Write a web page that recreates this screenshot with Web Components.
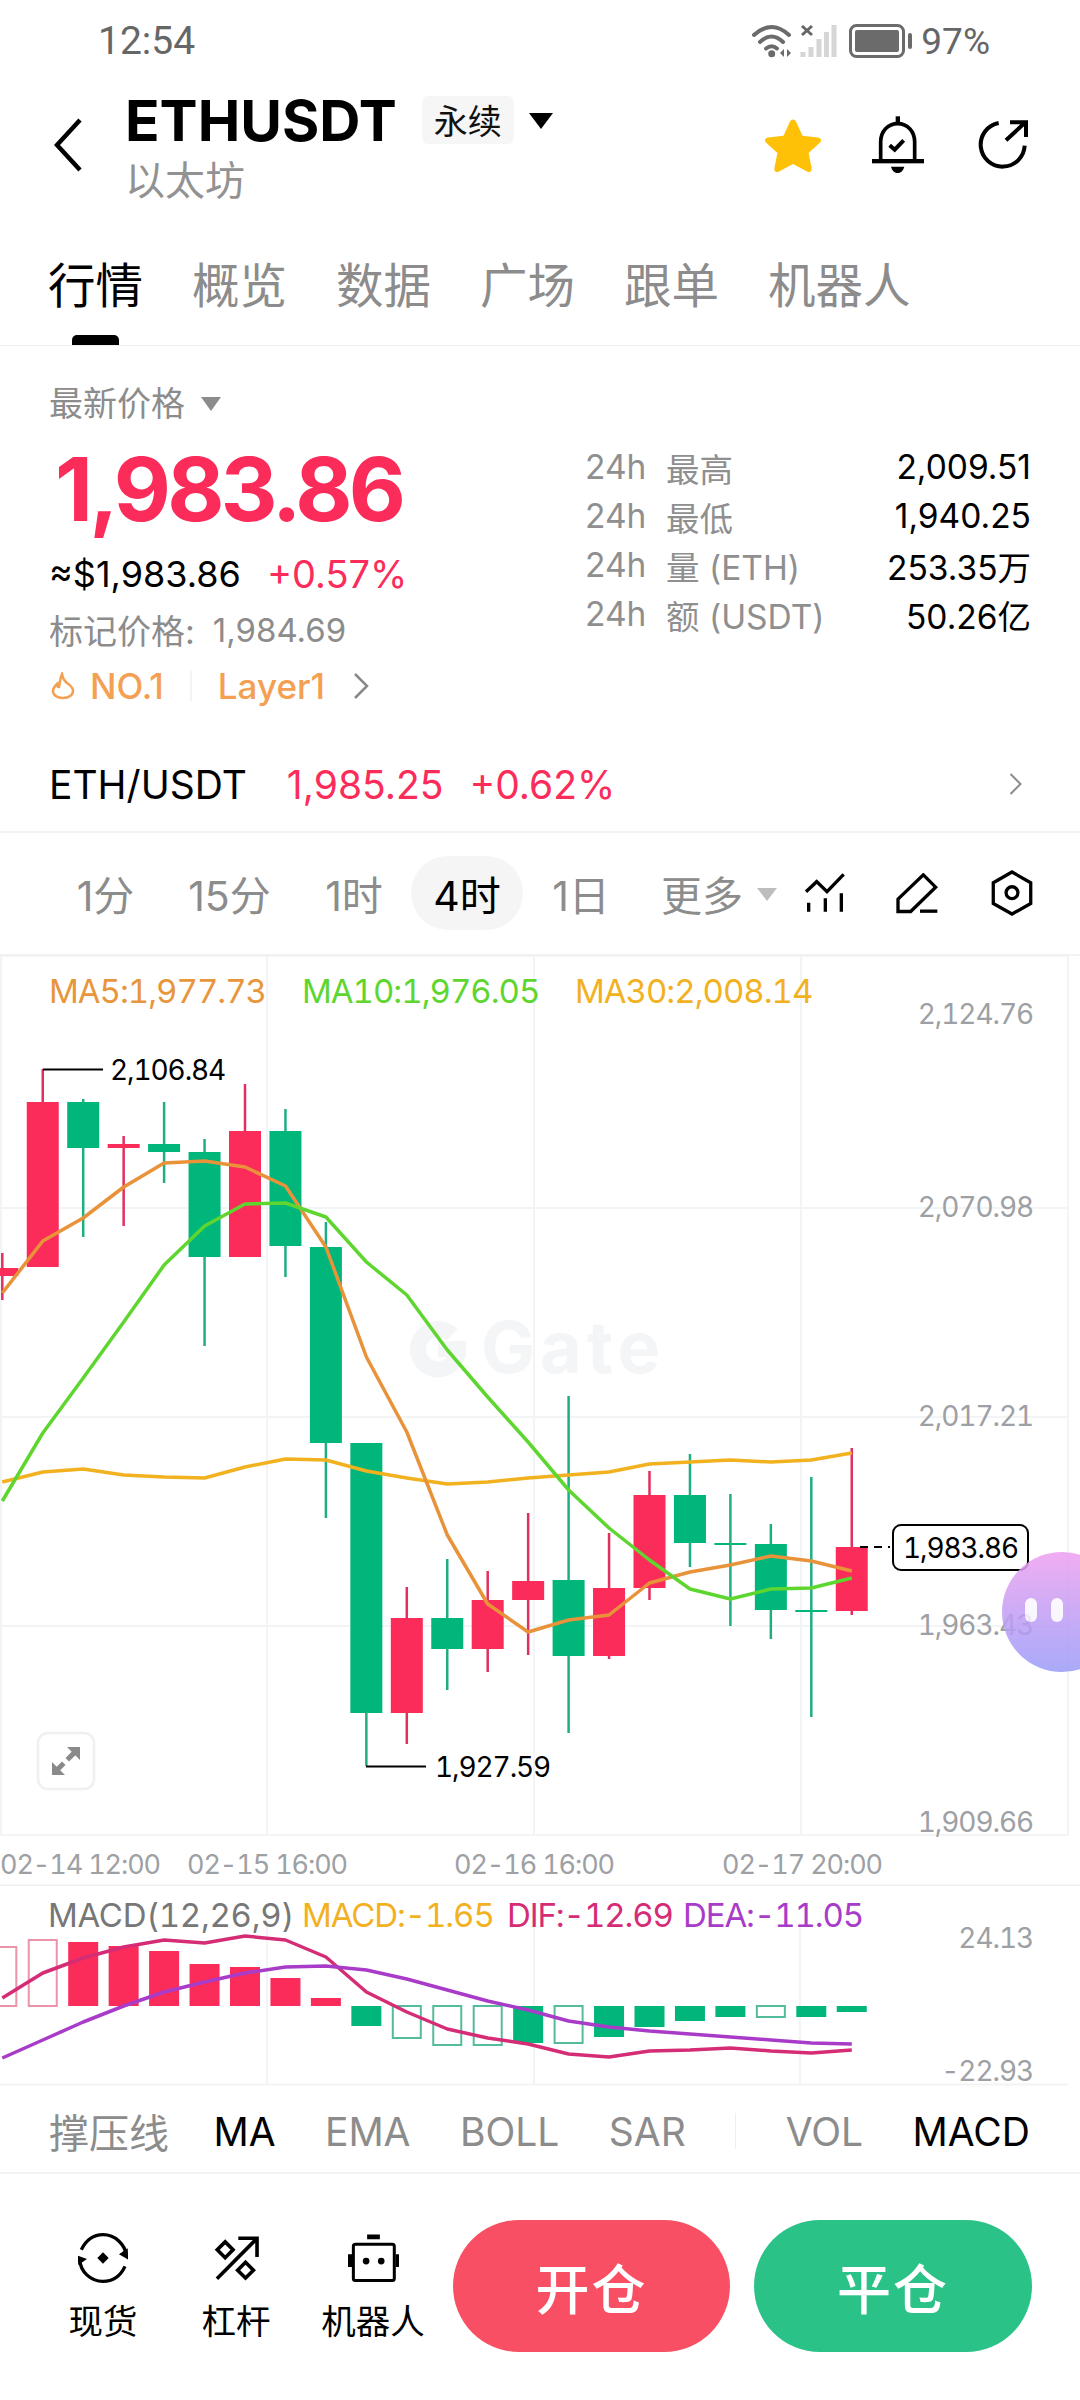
<!DOCTYPE html>
<html lang="zh">
<head>
<meta charset="utf-8">
<title>ETHUSDT</title>
<style>
html, body { margin: 0; padding: 0; background: #fff; }
body { font-family: Inter, "Noto Sans CJK SC", sans-serif; }
</style>
</head>
<body>
<market-app>
    <status-bar></status-bar>
    <market-header></market-header>
    <market-tabs>
        <market-tab active>行情</market-tab>
        <market-tab>概览</market-tab>
        <market-tab>数据</market-tab>
        <market-tab>广场</market-tab>
        <market-tab>跟单</market-tab>
        <market-tab>机器人</market-tab>
    </market-tabs>
    <price-panel>
        <stat-row label="最高" value="2,009.51"></stat-row>
        <stat-row label="最低" value="1,940.25"></stat-row>
        <stat-row label="量 (ETH)" value="253.35万"></stat-row>
        <stat-row label="额 (USDT)" value="50.26亿"></stat-row>
    </price-panel>
    <spot-row></spot-row>
    <interval-bar></interval-bar>
    <kline-chart></kline-chart>
    <macd-panel></macd-panel>
    <indicator-bar></indicator-bar>
    <trade-bar></trade-bar>
    <float-ball></float-ball>
</market-app>

<script>
const RED = '#fb2c5a';
const GREEN = '#00b67a';
const GRID = '#f3f4f5';
const candleX = (i) => 2.3 + 40.45 * i;

// [up, bodyTop, bodyBottom, wickTop, wickBottom]
const CANDLES = [
    [1, 1268, 1276, 1253, 1300], [1, 1102, 1267, 1069, 1267], [0, 1102, 1148, 1099, 1237],
    [1, 1144, 1148, 1136, 1226], [0, 1144, 1152, 1102, 1183], [0, 1152, 1257, 1139, 1346],
    [1, 1131, 1257, 1084, 1257], [0, 1131, 1246, 1109, 1277], [0, 1247, 1443, 1222, 1518],
    [0, 1443, 1713, 1443, 1766], [1, 1618, 1713, 1587, 1744], [0, 1618, 1649, 1559, 1690],
    [1, 1600, 1649, 1571, 1672], [1, 1581, 1600, 1513, 1655], [0, 1580, 1656, 1396, 1733],
    [1, 1588, 1656, 1533, 1659], [1, 1495, 1588, 1471, 1600], [0, 1495, 1543, 1454, 1567],
    [0, 1543, 1545, 1494, 1626], [0, 1544, 1610, 1524, 1639], [0, 1610, 1612, 1477, 1717],
    [1, 1547, 1611, 1448, 1615]
];
const MA5 = [1293, 1241, 1218, 1187, 1163, 1161, 1167, 1186, 1247, 1357, 1432, 1535, 1604, 1632, 1620, 1615, 1583, 1572, 1565, 1556, 1561, 1571];
const MA10 = [1501, 1433, 1378, 1322, 1265, 1226, 1204, 1203, 1217, 1262, 1295, 1350, 1397, 1442, 1490, 1528, 1560, 1589, 1599, 1589, 1588, 1578];
const MA30 = [1482, 1472, 1469, 1475, 1477, 1478, 1467, 1459, 1460, 1471, 1478, 1484, 1482, 1478, 1475, 1472, 1464, 1462, 1460, 1462, 1460, 1453];
const DIF = [1998, 1973, 1958, 1947, 1940, 1943, 1936, 1940, 1957, 1992, 2012, 2029, 2038, 2044, 2054, 2057, 2051, 2050, 2048, 2051, 2053, 2050];
const DEA = [2058, 2040, 2022, 2006, 1992, 1982, 1973, 1967, 1966, 1970, 1979, 1990, 2001, 2010, 2021, 2027, 2031, 2034, 2037, 2040, 2043, 2044];
// [solid, barEnd] drawn from the zero line at y=2006
const MACD_BARS = [
    [0, 1947], [0, 1940], [1, 1942], [1, 1946], [1, 1951], [1, 1964], [1, 1967], [1, 1978], [1, 1998],
    [1, 2026], [0, 2038], [0, 2045], [0, 2045], [1, 2043], [0, 2043], [1, 2037], [1, 2027], [1, 2021],
    [1, 2017], [0, 2017], [1, 2017], [1, 2012]
];

const linePoints = (ys) => ys.map((y, i) => `${candleX(i).toFixed(1)},${y}`).join(' ');

class MarketApp extends HTMLElement {
    constructor() {
        super();
        this.attachShadow({ mode: 'open' });
    }

    connectedCallback() {
        this.shadowRoot.innerHTML = `
        <style>
            :host {
                display: flex;
                flex-direction: column;
                position: relative;
                width: 1080px;
                height: 2400px;
                overflow: hidden;
                background: #fff;
                color: #000;
                font-family: Inter, "Noto Sans CJK SC", sans-serif;
            }
        </style>
        <slot></slot>`;
    }
}

class StatusBar extends HTMLElement {
    constructor() {
        super();
        this.attachShadow({ mode: 'open' });
    }

    connectedCallback() {
        this.shadowRoot.innerHTML = `
        <style>
            :host {
                display: flex;
                align-items: center;
                height: 73px;
                padding: 5px 90px 0 98px;
                color: #666;
                font-family: Roboto, sans-serif;
            }
            .time { font-size: 39px; }
            .right { margin-left: auto; display: flex; align-items: center; gap: 8px; }
            .pct { font-size: 37px; }
            svg { display: block; }
        </style>
        <span class="time">12:54</span>
        <div class="right">
            <svg width="162" height="34" viewBox="0 0 162 34">
                <g fill="none" stroke="#6b6b6b" stroke-width="4" stroke-linecap="round">
                    <path d="M3 11Q20.7-5 38 11"/>
                    <path d="M9 18Q20.7 7 32 18"/>
                    <path d="M15 24.500Q20.700 20 26 24.500"/>
                </g>
                <circle cx="20.700" cy="29.700" r="3.500" fill="#6b6b6b"/>
                <path d="M33 25v8l-4-4zM36 25v8l4-4z" fill="#6b6b6b"/>
                <path d="M51 2l10 9M61 2l-10 9" stroke="#666" stroke-width="3"/>
                <g stroke="#d6d6d6" stroke-width="5">
                    <path d="M52 28v5M60 23v10M68 15v18M75.500 8v25M83 1v32"/>
                </g>
                <rect x="99.500" y="1.500" width="53" height="31" rx="6" fill="none" stroke="#6b6b6b" stroke-width="3"/>
                <rect x="104" y="6" width="44" height="22" rx="2" fill="#6b6b6b"/>
                <rect x="157" y="9" width="4" height="16" rx="2" fill="#6b6b6b"/>
            </svg>
            <span class="pct">97%</span>
        </div>`;
    }
}

class MarketHeader extends HTMLElement {
    constructor() {
        super();
        this.attachShadow({ mode: 'open' });
    }

    connectedCallback() {
        this.shadowRoot.innerHTML = `
        <style>
            :host {
                display: flex;
                align-items: center;
                height: 134px;
                padding: 0 51px 0 54px;
            }
            svg { display: block; flex: none; }
            .title { margin-left: 43px; margin-top: 1px; }
            .top { display: flex; align-items: center; height: 60px; }
            .sym { font-size: 57px; font-weight: 700; line-height: 60px; position: relative; top: 1px; }
            .badge {
                margin-left: 25px;
                width: 92px;
                height: 48px;
                border-radius: 6px;
                background: #f6f6f6;
                display: flex;
                align-items: center;
                justify-content: center;
                font-size: 34px;
                color: #111;
            }
            .caret { margin-left: 15px; margin-top: 2px; }
            .sub { margin-top: 11px; font-size: 40px; line-height: 40px; color: #929292; }
            .icons { margin-left: auto; display: flex; align-items: center; }
            .bell { margin-left: 49px; }
            .share { margin-left: 53px; }
        </style>
        <svg width="28" height="54" viewBox="0 0 28 54"><path d="M26 2L3 27l23 25" fill="none" stroke="#000" stroke-width="4.500"/></svg>
        <div class="title">
            <div class="top">
                <span class="sym">ETHUSDT</span>
                <span class="badge">永续</span>
                <svg class="caret" width="24" height="16" viewBox="0 0 24 16"><path d="M0 0h24L12 16z" fill="#000"/></svg>
            </div>
            <div class="sub">以太坊</div>
        </div>
        <div class="icons">
            <svg width="60" height="56" viewBox="0 0 60 56"><path d="M30 2.500c1.500 0 2.500 1 3.200 2.600l6.300 13.600 15.300 1.800c3.500.5 4.200 3.400 2 5.300L45.600 36l3 15c.6 3.300-1.800 4.900-4.600 3.400L30 47l-14 7.400c-2.800 1.500-5.200-.1-4.600-3.400l3-15L3.200 25.800c-2.200-1.900-1.500-4.800 2-5.300l15.300-1.800 6.300-13.600c.7-1.600 1.700-2.600 3.200-2.600z" fill="#ffc107"/></svg>
            <svg class="bell" width="52" height="58" viewBox="398 318 156 172">
                <g fill="none" stroke="#000" stroke-width="11">
                    <path d="M424 452V395c0-32 22-55 51-55s51 23 51 55v57"/>
                    <path d="M451 405l15 13 27-28" stroke-width="12"/>
                </g>
                <rect x="398" y="446" width="156" height="13" fill="#000"/>
                <rect x="469" y="318" width="13" height="20" fill="#000"/>
                <path d="M455 469h40c-4 14-12 19-20 19s-16-5-20-19z" fill="#000"/>
            </svg>
            <svg class="share" width="52" height="52" viewBox="713 332 156 156">
                <g fill="none" stroke="#000" stroke-width="12">
                    <path d="M778 344A66 66 0 1 0 856 412"/>
                    <path d="M800 396l58-54M812 342h48v44"/>
                </g>
            </svg>
        </div>`;
    }
}

class MarketTabs extends HTMLElement {
    constructor() {
        super();
        this.attachShadow({ mode: 'open' });
    }

    connectedCallback() {
        this.shadowRoot.innerHTML = `
        <style>
            :host {
                display: flex;
                gap: 49px;
                height: 133px;
                padding-left: 48px;
                border-bottom: 1px solid #f0f0f0;
            }
        </style>
        <slot></slot>`;
    }
}

class MarketTab extends HTMLElement {
    constructor() {
        super();
        this.attachShadow({ mode: 'open' });
    }

    connectedCallback() {
        this.shadowRoot.innerHTML = `
        <style>
            :host {
                display: block;
                position: relative;
                font-size: 47.500px;
                line-height: 148px;
                height: 133px;
                color: #8c8c8c;
            }
            :host([active]) { color: #000; }
            :host([active])::after {
                content: "";
                position: absolute;
                left: 24px;
                bottom: 0;
                width: 47px;
                height: 10px;
                border-radius: 5px 5px 0 0;
                background: #000;
            }
        </style>
        <slot></slot>`;
    }
}

class StatRow extends HTMLElement {
    constructor() {
        super();
        this.attachShadow({ mode: 'open' });
    }

    connectedCallback() {
        this.shadowRoot.innerHTML = `
        <style>
            :host {
                display: flex;
                align-items: center;
                height: 49px;
                font-size: 33.500px;
            }
            .period { width: 81px; color: #8f8f8f; }
            .label { color: #8f8f8f; }
            .value { margin-left: auto; color: #000; }
        </style>
        <span class="period">24h</span>
        <span class="label">${this.getAttribute('label')}</span>
        <span class="value">${this.getAttribute('value')}</span>`;
    }
}

class PricePanel extends HTMLElement {
    constructor() {
        super();
        this.attachShadow({ mode: 'open' });
    }

    connectedCallback() {
        this.shadowRoot.innerHTML = `
        <style>
            :host {
                display: grid;
                grid-template-columns: 536px 446px;
                height: 386px;
                padding: 0 49px;
            }
            .left { padding-top: 36px; }
            .head { display: flex; align-items: center; height: 40px; font-size: 34px; color: #8c8c8c; }
            .head svg { margin-left: 16px; margin-top: 4px; }
            .price {
                margin-top: 14px;
                margin-left: 6px;
                font-size: 88px;
                font-weight: 700;
                line-height: 106px;
                letter-spacing: -3.700px;
                color: ${RED};
            }
            .line { display: flex; align-items: center; height: 50px; font-size: 36px; }
            .usd { margin-top: 7px; }
            .up { margin-left: 26px; font-size: 38px; color: ${RED}; }
            .mark { margin-top: 6px; font-size: 34px; color: #8c8c8c; }
            .mark span { margin-left: 18px; font-size: 33px; }
            .tags { margin-top: 6px; font-size: 35px; color: #f4a052; font-weight: 500; }
            .tags .no { margin-left: 15px; }
            .tags i { width: 2px; height: 30px; background: #f4f4f4; margin: 0 26px 0 26px; }
            .tags .chev { margin-left: 28px; }
            .right { padding-top: 97px; }
            svg { display: block; flex: none; }
        </style>
        <div class="left">
            <div class="head">最新价格
                <svg width="20" height="14" viewBox="0 0 20 14"><path d="M0 0h20L10 14z" fill="#8c8c8c"/></svg>
            </div>
            <div class="price">1,983.86</div>
            <div class="line usd"><span>≈$1,983.86</span><span class="up">+0.57%</span></div>
            <div class="line mark">标记价格:<span>1,984.69</span></div>
            <div class="line tags">
                <svg width="24" height="28" viewBox="0 0 24 28" style="margin-left:2px"><path d="M11 2c1 5 2 6 5 9 3 2 6 5 6 8 0 4-4 7-10 7S2 23 2 19c0-3 2-5 4-7 0 2 1 3 2 3 1-4 1-9 3-13z" fill="none" stroke="#f4a052" stroke-width="2.500"/></svg>
                <span class="no">NO.1</span><i></i><span>Layer1</span>
                <svg class="chev" width="16" height="26" viewBox="0 0 16 26"><path d="M2 1l12 12L2 25" fill="none" stroke="#888" stroke-width="2.500"/></svg>
            </div>
        </div>
        <div class="right"><slot></slot></div>`;
    }
}

class SpotRow extends HTMLElement {
    constructor() {
        super();
        this.attachShadow({ mode: 'open' });
    }

    connectedCallback() {
        this.shadowRoot.innerHTML = `
        <style>
            :host {
                display: flex;
                align-items: center;
                height: 93px;
                padding: 7px 57px 0 49px;
                border-bottom: 2px solid #f2f2f2;
                font-size: 39px;
            }
            .last { margin-left: 40px; color: ${RED}; }
            .chg { margin-left: 26px; color: ${RED}; }
            svg { margin-left: auto; display: block; }
        </style>
        <span>ETH/USDT</span>
        <span class="last">1,985.25</span>
        <span class="chg">+0.62%</span>
        <svg width="14" height="22" viewBox="0 0 14 22"><path d="M1.500 1l10 10-10 10" fill="none" stroke="#8c8c8c" stroke-width="2"/></svg>`;
    }
}

class IntervalBar extends HTMLElement {
    constructor() {
        super();
        this.attachShadow({ mode: 'open' });
    }

    connectedCallback() {
        const items = [['1分', 113], ['15分', 135], ['1时', 114], ['4时', 112], ['1日', 116], ['更多', 126]];
        this.shadowRoot.innerHTML = `
        <style>
            :host {
                display: flex;
                align-items: center;
                height: 121px;
                padding-left: 49px;
                border-bottom: 2px solid #f2f2f2;
                font-size: 41px;
                color: #8c8c8c;
            }
            .item {
                display: flex;
                align-items: center;
                justify-content: center;
                height: 74px;
                border-radius: 37px;
            }
            .item.on { background: #f5f5f5; color: #000; }
            svg { display: block; flex: none; }
            .tri { margin-left: -8px; margin-top: 2px; }
            .i1 { margin-left: 26px; }
            .i2 { margin-left: 49px; }
            .i3 { margin-left: 53px; }
        </style>
        ${items.map(([t, w]) => `<div class="item${t === '4时' ? ' on' : ''}" style="width:${w}px">${t}</div>`).join('')}
        <svg class="tri" width="20" height="13" viewBox="0 0 20 13"><path d="M0 0h20L10 13z" fill="#bdbdbd"/></svg>
        <svg class="i1" width="44" height="40" viewBox="66 44 122 120">
            <path d="M70 100l32-30 31 30 50-52" fill="none" stroke="#000" stroke-width="10"/>
            <path d="M78 133v27M128 120v40M176 105v55" fill="none" stroke="#000" stroke-width="10"/>
        </svg>
        <svg class="i2" width="42" height="41" viewBox="346 40 126 122">
            <path d="M428 45l37 37-75 73h-38v-37z" fill="none" stroke="#000" stroke-width="10"/>
            <path d="M418 154h52" fill="none" stroke="#000" stroke-width="10"/>
        </svg>
        <svg class="i3" width="42" height="46" viewBox="627 36 126 140">
            <path d="M690 42l57 33v63l-57 32-57-32V75z" fill="none" stroke="#000" stroke-width="10"/>
            <circle cx="690" cy="105" r="18" fill="none" stroke="#000" stroke-width="10"/>
        </svg>`;
    }
}

class KlineChart extends HTMLElement {
    constructor() {
        super();
        this.attachShadow({ mode: 'open' });
    }

    connectedCallback() {
        const grid = [1, 267, 534, 801, 1068].map((x) => `<path d="M${x} 956V1835"/>`).join('')
            + [956, 1208, 1417, 1626, 1835].map((y) => `<path d="M0 ${y}H1068"/>`).join('');
        const candles = CANDLES.map(([up, top, bottom, wickTop, wickBottom], i) => {
            const x = candleX(i);
            const color = up ? RED : GREEN;
            return `<path d="M${x} ${wickTop}V${wickBottom}" stroke="${up ? '#e0305f' : '#1fae84'}" stroke-width="2.500"/>`
                + `<rect x="${x - 16}" y="${top}" width="32" height="${bottom - top}" fill="${color}"/>`;
        }).join('');
        const axis = [['2,124.76', 1014], ['2,070.98', 1207], ['2,017.21', 1416], ['1,963.43', 1625], ['1,909.66', 1822]];
        const dates = [['02-14 12:00', 0], ['02-15 16:00', 187], ['02-16 16:00', 454], ['02-17 20:00', 722]];
        this.shadowRoot.innerHTML = `
        <style>
            :host { display: block; height: 930px; }
            svg { display: block; }
            text {
                font-family: Inter, sans-serif;
                font-size: 28px;
                letter-spacing: -1.100px;
                font-variant-numeric: tabular-nums;
                dominant-baseline: central;
            }
            .axis { fill: #9da0a4; }
            .date { fill: #9da0a4; font-size: 27px; }
            .ma { font-size: 33px; letter-spacing: -1px; }
            .mark { fill: #000; }
            .wm { font-size: 72px; font-weight: 700; fill: #f3f5f6; letter-spacing: 5px; dominant-baseline: auto; }
        </style>
        <svg width="1080" height="930" viewBox="0 956 1080 930">
            <g stroke="${GRID}" stroke-width="2" fill="none">${grid}</g>
            <path d="M458 1349A20 20 0 1 1 452 1335" fill="none" stroke="#f3f5f6" stroke-width="16"/>
            <rect x="438" y="1341" width="28" height="16" fill="#f3f5f6"/>
            <text class="wm" x="481" y="1373">Gate</text>
            ${candles}
            <g fill="none" stroke-width="3.500" stroke-linejoin="round">
                <polyline points="${linePoints(MA30)}" stroke="#f2b11f"/>
                <polyline points="${linePoints(MA5)}" stroke="#e8923a"/>
                <polyline points="${linePoints(MA10)}" stroke="#5ed62f"/>
            </g>
            <text class="ma" x="49" y="991" fill="#e8963c">MA5:1,977.73</text>
            <text class="ma" x="302" y="991" fill="#5ed62f">MA10:1,976.05</text>
            <text class="ma" x="575" y="991" fill="#f2b11f">MA30:2,008.14</text>
            ${axis.map(([t, y]) => `<text class="axis" x="1033" y="${y}" text-anchor="end">${t}</text>`).join('')}
            <path d="M43 1069.500H103M366 1766.500H426" stroke="#000" stroke-width="2" fill="none"/>
            <text class="mark" x="110" y="1070">2,106.84</text>
            <text class="mark" x="435" y="1767">1,927.59</text>
            <path d="M860 1547H890" stroke="#000" stroke-width="2" stroke-dasharray="8 6" fill="none"/>
            <rect x="893" y="1525" width="135" height="45" rx="8" fill="#fff" stroke="#000" stroke-width="2"/>
            <text class="mark" x="960.500" y="1548" text-anchor="middle">1,983.86</text>
            <rect x="38" y="1733" width="56" height="56" rx="10" fill="#fff" stroke="#f0f0f0" stroke-width="2.500"/>
            <path d="M80 1747v13l-13-13zM52 1775v-13l13 13z" fill="#8a8a8a"/>
            <path d="M56 1771l20-20" stroke="#8a8a8a" stroke-width="5" stroke-dasharray="10 5" stroke-dashoffset="-1" fill="none"/>
            ${dates.map(([t, x]) => `<text class="date" x="${x}" y="1864">${t}</text>`).join('')}
            <path d="M0 1885.500H1080" stroke="#f0f0f0" stroke-width="2"/>
        </svg>`;
    }
}

class MacdPanel extends HTMLElement {
    constructor() {
        super();
        this.attachShadow({ mode: 'open' });
    }

    connectedCallback() {
        const bars = MACD_BARS.map(([solid, end], i) => {
            const x = candleX(i) - 15;
            const up = end < 2006;
            const top = Math.min(end, 2006);
            const h = Math.abs(end - 2006);
            if (solid) return `<rect x="${x}" y="${top}" width="30" height="${h}" fill="${up ? RED : GREEN}"/>`;
            return `<rect x="${x + 1}" y="${top}" width="28" height="${h}" fill="none" stroke="${up ? '#eb93a8' : '#55bb9d'}" stroke-width="2"/>`;
        }).join('');
        this.shadowRoot.innerHTML = `
        <style>
            :host { display: block; height: 201px; }
            svg { display: block; }
            text {
                font-family: Inter, sans-serif;
                font-size: 33px;
                letter-spacing: -1.100px;
                font-variant-numeric: tabular-nums;
                dominant-baseline: central;
            }
            .name { letter-spacing: -.3px; }
            .axis { font-size: 28px; fill: #9da0a4; }
        </style>
        <svg width="1080" height="201" viewBox="0 1886 1080 201">
            <g stroke="${GRID}" stroke-width="2" fill="none">
                <path d="M267 1923V2084M534 1923V2084M800 1923V2084M0 2084.500H1068"/>
            </g>
            ${bars}
            <g fill="none" stroke-width="3.500" stroke-linejoin="round">
                <polyline points="${linePoints(DIF)}" stroke="#d52c76"/>
                <polyline points="${linePoints(DEA)}" stroke="#a93bc9"/>
            </g>
            <text class="name" x="48" y="1915" fill="#777">MACD(12,26,9)</text>
            <text x="302" y="1915" fill="#f2b11f">MACD:-1.65</text>
            <text x="507" y="1915" fill="#d52c76">DIF:-12.69</text>
            <text x="683" y="1915" fill="#a93bc9">DEA:-11.05</text>
            <text class="axis" x="1033" y="1938" text-anchor="end">24.13</text>
            <text class="axis" x="1033" y="2071" text-anchor="end">-22.93</text>
        </svg>`;
    }
}

class IndicatorBar extends HTMLElement {
    constructor() {
        super();
        this.attachShadow({ mode: 'open' });
    }

    connectedCallback() {
        const items = [['撑压线'], ['MA', 1], ['EMA'], ['BOLL'], ['SAR'], null, ['VOL'], ['MACD', 1]];
        this.shadowRoot.innerHTML = `
        <style>
            :host {
                display: flex;
                align-items: center;
                justify-content: space-between;
                height: 82px;
                padding: 4px 50px 0 49px;
                border-bottom: 2px solid #f2f2f2;
                font-size: 39px;
                color: #8c8c8c;
            }
            .on { color: #000; }
            .cjk { font-size: 40px; margin-right: -5px; }
            i { width: 1px; height: 36px; background: #eee; }
        </style>
        ${items.map((it) => it
            ? `<span class="${it[1] ? 'on' : ''}${it[0] === '撑压线' ? ' cjk' : ''}">${it[0]}</span>`
            : '<i></i>').join('')}`;
    }
}

class TradeBar extends HTMLElement {
    constructor() {
        super();
        this.attachShadow({ mode: 'open' });
    }

    connectedCallback() {
        this.shadowRoot.innerHTML = `
        <style>
            :host {
                display: flex;
                align-items: flex-start;
                height: 180px;
                padding: 46px 48px 0 43px;
            }
            .tool {
                width: 120px;
                margin-right: 13px;
                padding-top: 13px;
                display: flex;
                flex-direction: column;
                align-items: center;
                font-size: 34.500px;
                line-height: 40px;
                color: #000;
            }
            .tool.robot { margin-left: 4px; }
            .tool svg { display: block; height: 50px; margin-bottom: 19px; }
            .btn {
                height: 132px;
                border-radius: 66px;
                display: flex;
                align-items: center;
                justify-content: center;
                color: #fff;
                font-size: 54px;
                font-weight: 500;
                letter-spacing: 2px;
            }
            .open { width: 277px; margin-left: 7px; background: #f94f64; }
            .close { width: 278px; margin-left: 24px; background: #2bc287; }
        </style>
        <div class="tool">
            <svg width="50" height="50" viewBox="83 38 150 150">
                <g fill="none" stroke="#000" stroke-width="10">
                    <path d="M93 88C108 58 132 43 158 43c38 0 65 30 70 60"/>
                    <path d="M224 138c-14 30-38 45-66 45-38 0-68-30-70-65"/>
                </g>
                <path d="M206 106l26-18 2 34zM110 120l-26 18-2-28z" fill="#000" transform="translate(0 -4)"/>
                <path d="M158 96l17 17-17 17-17-17z" fill="#000"/>
            </svg>
            <span>现货</span>
        </div>
        <div class="tool">
            <svg width="46" height="50" viewBox="488 40 140 150">
                <g fill="none" stroke="#000" stroke-width="11">
                    <path d="M500 178L622 55M565 55h57v57"/>
                    <path d="M525 66l24 24-24 24-24-24z"/>
                    <path d="M587 128l24 24-24 24-24-24z"/>
                </g>
            </svg>
            <span>杠杆</span>
        </div>
        <div class="tool robot">
            <svg width="51" height="50" viewBox="893 40 152 146">
                <rect x="909" y="72" width="122" height="108" rx="6" fill="none" stroke="#000" stroke-width="9"/>
                <path d="M893 102h12v38h-12zM1035 102h10v38h-10zM950 43h38v14h-38z" fill="#000"/>
                <circle cx="947" cy="122" r="10" fill="#000"/>
                <circle cx="992" cy="122" r="10" fill="#000"/>
            </svg>
            <span>机器人</span>
        </div>
        <div class="btn open">开仓</div>
        <div class="btn close">平仓</div>`;
    }
}

class FloatBall extends HTMLElement {
    constructor() {
        super();
        this.attachShadow({ mode: 'open' });
    }

    connectedCallback() {
        this.shadowRoot.innerHTML = `
        <style>
            :host {
                position: absolute;
                left: 1002px;
                top: 1552px;
                width: 120px;
                height: 120px;
                border-radius: 50%;
                opacity: .85;
                background: linear-gradient(180deg, #ee9ff1 0%, #c79ef4 45%, #9a9cf9 100%);
            }
            i {
                position: absolute;
                top: 46px;
                width: 12px;
                height: 24px;
                border-radius: 6px;
                background: rgba(255, 255, 255, .9);
            }
            .a { left: 23px; }
            .b { left: 49px; }
        </style>
        <i class="a"></i><i class="b"></i>`;
    }
}

customElements.define('market-app', MarketApp);
customElements.define('status-bar', StatusBar);
customElements.define('market-header', MarketHeader);
customElements.define('market-tabs', MarketTabs);
customElements.define('market-tab', MarketTab);
customElements.define('stat-row', StatRow);
customElements.define('price-panel', PricePanel);
customElements.define('spot-row', SpotRow);
customElements.define('interval-bar', IntervalBar);
customElements.define('kline-chart', KlineChart);
customElements.define('macd-panel', MacdPanel);
customElements.define('indicator-bar', IndicatorBar);
customElements.define('trade-bar', TradeBar);
customElements.define('float-ball', FloatBall);
</script>
</body>
</html>
